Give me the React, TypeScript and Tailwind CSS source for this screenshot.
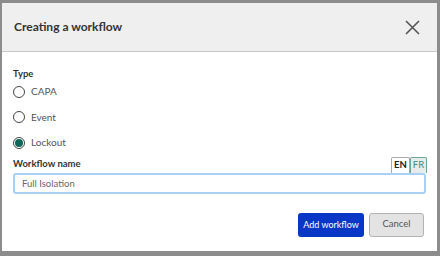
import { useState } from 'react';

const types = ['CAPA', 'Event', 'Lockout'];

export default function App() {
  const [type, setType] = useState('Lockout');
  const [lang, setLang] = useState<'EN' | 'FR'>('EN');

  return (
    <div className="w-[440px] h-[256px] bg-[#8c8c8c] pt-[3px] pl-[2px] pr-[3px] pb-[5px] font-['Lato','Open_Sans',sans-serif]">
      <div className="h-full bg-white flex flex-col">
        {/* Header */}
        <div className="h-[49px] shrink-0 bg-[#efefef] border-b border-[#c8c8c8] flex items-center justify-between pl-[12px] pr-[17px]">
          <h3 className="text-[12px] font-bold text-[#333]">Creating a workflow</h3>
          <button className="w-[16px] h-[16px] flex items-center justify-center text-[#555]">
            <svg width="15" height="15" viewBox="0 0 15 15" fill="none" stroke="currentColor" strokeWidth="1.6">
              <path d="M1 1L14 14M14 1L1 14" />
            </svg>
          </button>
        </div>

        {/* Body */}
        <div className="flex-1 pl-[11px] pr-[9px] pt-[15px]">
          <div className="text-[9.5px] font-bold text-[#333] leading-[14px]">Type</div>
          <div className="-mt-[2px] flex flex-col">
            {types.map(t => (
              <label key={t} className="h-[25.5px] flex items-center gap-[6px] cursor-pointer" onClick={() => setType(t)}>
                <span className="w-[12px] h-[12px] rounded-full border border-[#444] flex items-center justify-center bg-white">
                  {type === t && <span className="w-[8px] h-[8px] rounded-full bg-[#0d6658]" />}
                </span>
                <span className="text-[10px] text-[#555]">{t}</span>
              </label>
            ))}
          </div>

          <div className="mt-[1px] flex items-end justify-between">
            <div className="text-[9.5px] font-bold text-[#333] leading-[14px] mb-[2px]">Workflow name</div>
            <div className="flex mr-[1px]">
              <button
                onClick={() => setLang('EN')}
                className={`w-[19px] h-[16px] text-[9.5px] leading-[14px] rounded-t-[2px] border border-b-0 ${lang === 'EN' ? 'bg-white text-[#222] font-bold border-[#aaa]' : 'bg-[#e6ecea] text-[#3d8c7c] border-[#6aa79a]'}`}
              >
                EN
              </button>
              <button
                onClick={() => setLang('FR')}
                className={`w-[17px] h-[16px] text-[9.5px] leading-[14px] rounded-t-[2px] border border-b-0 ${lang === 'FR' ? 'bg-white text-[#222] font-bold border-[#aaa]' : 'bg-[#e6ecea] text-[#3d8c7c] border-[#6aa79a]'}`}
              >
                FR
              </button>
            </div>
          </div>
          <input
            defaultValue="Full Isolation"
            className="block w-[413px] h-[21px] border-2 border-[#a9d0f7] rounded-[3px] px-[7px] text-[9.5px] text-[#666] outline-none"
          />

          <div className="mt-[19px] flex justify-end gap-[5px] pr-[4px]">
            <button className="w-[66px] h-[24px] rounded-[3px] bg-[#0637c6] text-white text-[9px]">Add workflow</button>
            <button className="w-[55px] h-[24px] rounded-[3px] bg-[#e3e3e3] border border-[#b3b3b3] text-[#555] text-[9.5px]">Cancel</button>
          </div>
        </div>
      </div>
    </div>
  );
}
